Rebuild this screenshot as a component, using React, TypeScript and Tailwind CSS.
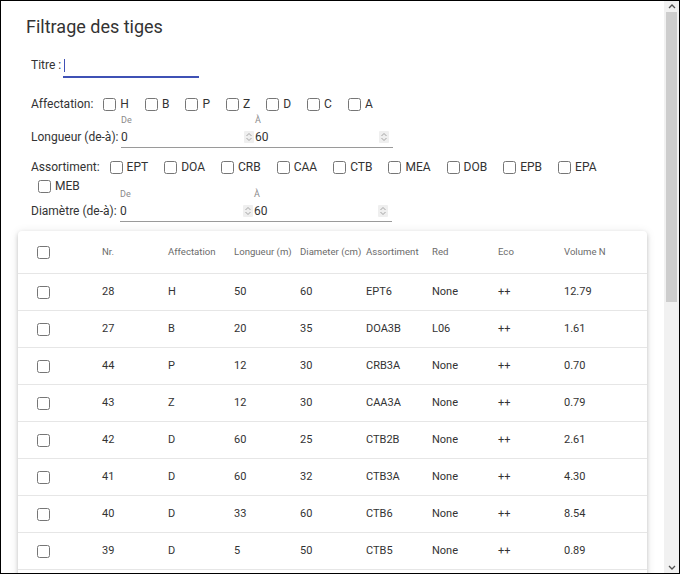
import React from 'react';

const affect = ['H', 'B', 'P', 'Z', 'D', 'C', 'A'];
const assort = ['EPT', 'DOA', 'CRB', 'CAA', 'CTB', 'MEA', 'DOB', 'EPB', 'EPA', 'MEB'];

const rows = [
  ['28', 'H', '50', '60', 'EPT6', 'None', '++', '12.79'],
  ['27', 'B', '20', '35', 'DOA3B', 'L06', '++', '1.61'],
  ['44', 'P', '12', '30', 'CRB3A', 'None', '++', '0.70'],
  ['43', 'Z', '12', '30', 'CAA3A', 'None', '++', '0.79'],
  ['42', 'D', '60', '25', 'CTB2B', 'None', '++', '2.61'],
  ['41', 'D', '60', '32', 'CTB3A', 'None', '++', '4.30'],
  ['40', 'D', '33', '60', 'CTB6', 'None', '++', '8.54'],
  ['39', 'D', '5', '50', 'CTB5', 'None', '++', '0.89'],
];

function Box() {
  return <input type="checkbox" defaultChecked={false} className="m-0 w-[13px] h-[13px] shrink-0" />;
}

function Spin() {
  return (
    <span className="flex items-center justify-center w-[10px] h-[12px] bg-[#efefef] rounded-[1px]">
      <svg width="8" height="10" viewBox="0 0 8 10">
        <path d="M1.5 4 L4 1.5 L6.5 4 M1.5 6 L4 8.5 L6.5 6" stroke="#9a9a9a" fill="none" strokeWidth="0.9" />
      </svg>
    </span>
  );
}

function Item({ label }: { label: string }) {
  return (
    <span className="flex items-center h-[16px] ml-[7px] mr-[9px] gap-[4px]">
      <Box />
      <span>{label}</span>
    </span>
  );
}

function Range({ label, w, cls }: { label: string; w: string; cls: string }) {
  return (
    <div className={`flex flex-col ${cls}`}>
      <div className="flex h-[12px] text-[9px] leading-[12px] text-[#8a8a8a]">
        <span className={w}></span>
        <span className="w-[134px]">De</span>
        <span>À</span>
      </div>
      <div className="flex items-start mt-[1px]">
        <span className={`${w} h-[20px] flex items-center`}>{label}</span>
        <div className="flex h-[21px] w-[272px] border-b border-[#9a9a9a]">
          <div className="flex items-center justify-between w-[134px] h-[20px] pr-[1px]">
            <span>0</span>
            <Spin />
          </div>
          <div className="flex items-center justify-between w-[134px] h-[20px]">
            <span>60</span>
            <Spin />
          </div>
        </div>
      </div>
    </div>
  );
}

const grid = 'grid grid-cols-[84px_repeat(7,66px)_1fr] items-center';

export default function App() {
  return (
    <div className="w-[680px] h-[574px] border border-black flex overflow-hidden bg-white font-['Roboto','Liberation_Sans',sans-serif] text-[#333]">
      <div className="flex-1 overflow-hidden">
        <h1 className="mt-[15px] pl-[25px] text-[18px] leading-[22px] font-normal text-[#333]">Filtrage des tiges</h1>

        <div className="pl-[30px] pr-[16px] text-[12px]">
          <div className="flex items-start h-[22px] mt-[18px]">
            <span className="leading-[18px]">Titre :</span>
            <div className="ml-[2px] w-[136px] h-[22px] border-b-2 border-[#3f51b5] flex items-start">
              <span className="ml-[1px] mt-[3px] w-[1px] h-[13px] bg-[#3f51b5]"></span>
            </div>
          </div>

          <div className="flex items-center h-[20px] mt-[16px]">
            <span className="mr-[3px]">Affectation:</span>
            {affect.map((a) => (
              <Item key={a} label={a} />
            ))}
          </div>

          <Range label="Longueur (de-à):" w="w-[90px]" cls="" />

          <div className="flex flex-wrap items-center gap-y-[3px] mt-[11px]">
            <span className="mr-[3px] h-[16px] leading-[16px]">Assortiment:</span>
            {assort.map((a) => (
              <Item key={a} label={a} />
            ))}
          </div>

          <Range label="Diamètre (de-à):" w="w-[89px]" cls="mt-[-6px]" />
        </div>

        <div className="mx-[17px] mt-[9px] bg-white rounded-[4px] shadow-[0_2px_4px_rgba(0,0,0,0.18),0_1px_10px_rgba(0,0,0,0.1)]">
          <div className={`${grid} h-[43px] border-b border-[#e6e6e6] text-[9.6px] text-[#6b6b6b]`}>
            <div className="pl-[19px] flex items-center"><Box /></div>
            <div>Nr.</div>
            <div>Affectation</div>
            <div>Longueur (m)</div>
            <div>Diameter (cm)</div>
            <div>Assortiment</div>
            <div>Red</div>
            <div>Eco</div>
            <div>Volume N</div>
          </div>
          {rows.map((r, i) => (
            <div key={i} className={`${grid} h-[37px] border-b border-[#e6e6e6] text-[11px] text-[#333]`}>
              <div className="pl-[19px] flex items-center"><Box /></div>
              {r.map((c, j) => (
                <div key={j}>{c}</div>
              ))}
            </div>
          ))}
          <div className="h-[37px]"></div>
        </div>
      </div>

      <div className="w-[15px] h-full bg-[#f1f1f1] flex flex-col">
        <div className="h-[11px] flex items-center justify-center">
          <svg width="8" height="5" viewBox="0 0 8 5">
            <path d="M1 4 L4 1 L7 4" stroke="#505050" fill="none" strokeWidth="1.3" />
          </svg>
        </div>
        <div className="h-[290px] mx-[2px] bg-[#cdcdcd]"></div>
        <div className="flex-1"></div>
        <div className="h-[11px] flex items-center justify-center">
          <svg width="8" height="5" viewBox="0 0 8 5">
            <path d="M1 1 L4 4 L7 1" stroke="#505050" fill="none" strokeWidth="1.3" />
          </svg>
        </div>
      </div>
    </div>
  );
}
